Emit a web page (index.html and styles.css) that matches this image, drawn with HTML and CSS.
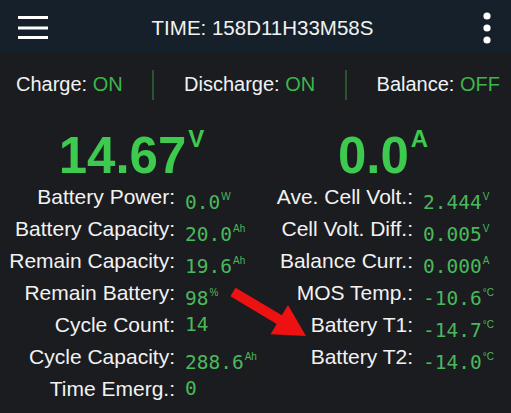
FILE: index.html
```html
<!DOCTYPE html>
<html>
<head>
<meta charset="utf-8">
<link rel="stylesheet" href="styles.css">
</head>
<body>
<div class="app">
  <header class="topbar">
    <svg class="menu" width="30" height="24" viewBox="0 0 30 24">
      <rect x="0" y="1" width="30" height="3" fill="#fff"/>
      <rect x="0" y="11.5" width="30" height="3" fill="#fff"/>
      <rect x="0" y="21" width="30" height="3" fill="#fff"/>
    </svg>
    <div class="title">TIME: 158D11H33M58S</div>
    <svg class="more" width="20" height="32" viewBox="0 0 20 32">
      <circle cx="10" cy="4" r="3.6" fill="#fff"/>
      <circle cx="10" cy="16" r="3.6" fill="#fff"/>
      <circle cx="10" cy="28" r="3.6" fill="#fff"/>
    </svg>
  </header>

  <section class="status">
    <div class="st">Charge: <span class="on">ON</span></div>
    <div class="sep"></div>
    <div class="st">Discharge: <span class="on">ON</span></div>
    <div class="sep"></div>
    <div class="st">Balance: <span class="on">OFF</span></div>
  </section>

  <section class="big">
    <div class="bignum">14.67<span class="bigunit">V</span></div>
    <div class="bignum">0.0<span class="bigunit">A</span></div>
  </section>

  <section class="stats">
    <div class="lbl">Battery Power:</div><div class="val">0.0<span class="u">W</span></div>
    <div class="lbl">Ave. Cell Volt.:</div><div class="val">2.444<span class="u">V</span></div>

    <div class="lbl">Battery Capacity:</div><div class="val">20.0<span class="u">Ah</span></div>
    <div class="lbl">Cell Volt. Diff.:</div><div class="val">0.005<span class="u">V</span></div>

    <div class="lbl">Remain Capacity:</div><div class="val">19.6<span class="u">Ah</span></div>
    <div class="lbl">Balance Curr.:</div><div class="val">0.000<span class="u">A</span></div>

    <div class="lbl">Remain Battery:</div><div class="val">98<span class="u">%</span></div>
    <div class="lbl">MOS Temp.:</div><div class="val">-10.6<span class="u">°C</span></div>

    <div class="lbl">Cycle Count:</div><div class="val">14</div>
    <div class="lbl">Battery T1:</div><div class="val">-14.7<span class="u">°C</span></div>

    <div class="lbl">Cycle Capacity:</div><div class="val">288.6<span class="u">Ah</span></div>
    <div class="lbl">Battery T2:</div><div class="val">-14.0<span class="u">°C</span></div>

    <div class="lbl">Time Emerg.:</div><div class="val">0</div>
    <div class="lbl"></div><div class="val"></div>
  </section>

  <svg class="arrow" width="511" height="413" viewBox="0 0 511 413">
    <polygon fill="#ee1111" points="235.6,287.7 281.9,315.3 288,305 306,336 270.6,334.2 276.7,323.9 230.4,296.3"/>
  </svg>
</div>
</body>
</html>
```

FILE: styles.css
```css
html, body {
  margin: 0;
  padding: 0;
  background: #1b1c20;
}
body {
  font-family: "Liberation Sans", Arial, sans-serif;
  color: #f2f2f2;
  width: 511px;
  height: 413px;
  overflow: hidden;
}
.app {
  position: relative;
  width: 511px;
  height: 413px;
}
.topbar {
  height: 53px;
  background: #16202a;
  display: flex;
  align-items: center;
  padding: 0 14px 0 18px;
}
.menu {
  display: block;
  margin-top: 0;
}
.title {
  flex: 1;
  text-align: center;
  font-size: 20.5px;
  margin-top: 3px;
}
.more {
  display: block;
  margin-top: 3px;
}
.status {
  height: 62px;
  line-height: 62px;
  display: flex;
  align-items: center;
  justify-content: space-between;
  padding: 0 11px 0 16px;
  font-size: 20px;
}
.on {
  color: #3cb54a;
}
.sep {
  width: 2px;
  height: 30px;
  background: #2c5431;
  margin-top: 2px;
}
.big {
  display: grid;
  grid-template-columns: 255px 1fr;
  padding-top: 15px;
  line-height: 51px;
  height: 51px;
}
.bignum {
  text-align: center;
  font-size: 51px;
  font-weight: bold;
  color: #3ec94f;
  white-space: nowrap;
}
.bignum:first-child {
  padding-left: 8px;
}
.bigunit {
  display: inline-block;
  vertical-align: top;
  font-size: 24px;
  line-height: 17px;
  margin-left: 2px;
}
.stats {
  display: grid;
  grid-template-columns: 175px 80px 158px 1fr;
  grid-auto-rows: 32px;
  line-height: 32px;
}
.lbl {
  text-align: right;
  font-size: 21px;
  white-space: nowrap;
}
.val {
  padding-left: 10px;
  font-family: "DejaVu Sans Mono", "Liberation Mono", monospace;
  font-size: 19.5px;
  color: #4ab85a;
  white-space: nowrap;
}
.u {
  font-family: "Liberation Sans", Arial, sans-serif;
  font-size: 10px;
  vertical-align: 9px;
  margin-left: 1px;
}
.arrow {
  position: absolute;
  left: 0;
  top: 0;
  pointer-events: none;
}
```
